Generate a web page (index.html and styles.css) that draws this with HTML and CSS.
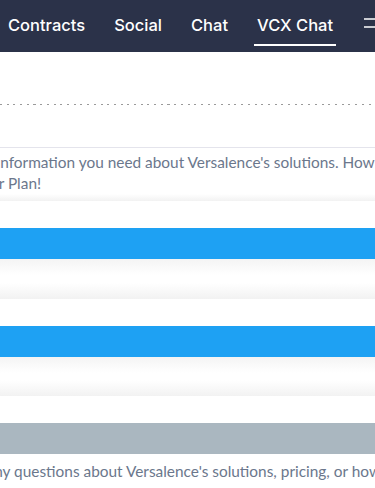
FILE: index.html
```html
<!DOCTYPE html>
<html lang="en">
<head>
    <meta charset="UTF-8">
    <meta name="viewport" content="width=device-width, initial-scale=1.0">
    <title>VCX Chat | Versalence</title>
    <link rel="stylesheet" href="styles.css">
</head>
<body>
    <nav class="top-nav">
        <ul class="nav-links">
            <li><a href="#">Contracts</a></li>
            <li><a href="#">Social</a></li>
            <li><a href="#">Chat</a></li>
            <li><a href="#" class="active">VCX Chat</a></li>
        </ul>
        <button class="menu-btn" aria-label="Menu">
            <svg width="18" height="12" viewBox="0 0 18 12">
                <path d="M0 1h18M0 9h18" stroke="#fff" stroke-width="1.5" fill="none"/>
            </svg>
        </button>
    </nav>

    <div class="page">
        <div class="title-area"></div>
        <hr class="dotted-rule">

        <section class="intro">
            <p class="intro-text">Find all the information you need about Versalence's solutions. How can we help you?<br>Choose your Plan!</p>
        </section>

        <div class="fade-top"></div>

        <div class="plans">
            <div class="plan">
                <div class="plan-body"></div>
                <a href="#" class="plan-btn plan-btn-blue"></a>
            </div>
            <div class="plan-sep"></div>
            <div class="plan">
                <div class="plan-body"></div>
                <a href="#" class="plan-btn plan-btn-blue"></a>
            </div>
            <div class="plan-sep"></div>
            <div class="plan">
                <div class="plan-body"></div>
                <a href="#" class="plan-btn plan-btn-gray"></a>
            </div>
        </div>

        <p class="contact-text">If you have any questions about Versalence's solutions, pricing, or how to get started, reach out to us.</p>
    </div>
</body>
</html>
```

FILE: styles.css
```css
* {
    margin: 0;
    padding: 0;
    box-sizing: border-box;
}

body {
    background-color: #fff;
    font-family: 'Lato', 'Open Sans', sans-serif;
    overflow: hidden;
}

.top-nav {
    height: 52px;
    background-color: #2b3249;
    display: flex;
    align-items: center;
    padding-left: 5px;
    position: relative;
}

.nav-links {
    list-style: none;
    display: flex;
    gap: 23px;
    height: 100%;
}

.nav-links li {
    display: flex;
}

.nav-links a {
    display: flex;
    align-items: center;
    padding: 0 3px 3px;
    color: #fff;
    text-decoration: none;
    font-family: 'Inter', 'Roboto', sans-serif;
    font-size: 16.5px;
    font-weight: 500;
    position: relative;
}

.nav-links a.active::after {
    content: "";
    position: absolute;
    left: 0;
    right: 0;
    top: 44px;
    height: 2px;
    background-color: #fff;
}

.menu-btn {
    position: absolute;
    left: 364px;
    top: 18px;
    background: none;
    border: none;
    display: flex;
}

.page {
    width: 100%;
}

.title-area {
    height: 52px;
}

.dotted-rule {
    border: none;
    height: 1px;
    background-image: repeating-linear-gradient(to right, #9a9a9a 0 2px, transparent 2px 6.7px);
}

.intro {
    margin-top: 42px;
    border-top: 1px solid #e4e4ec;
    padding-top: 4px;
    overflow: hidden;
}

.intro-text {
    white-space: nowrap;
    font-size: 15.4px;
    line-height: 21px;
    color: #6b778c;
    margin-left: -81px;
    text-indent: -1px;
}

.fade-top {
    height: 7px;
    background: linear-gradient(#fff, #f2f2f2);
}

.plan-body {
    height: 27px;
}

.plan-btn {
    display: block;
    height: 31px;
}

.plan-btn-blue {
    background-color: #1ea1f3;
}

.plan-btn-gray {
    background-color: #aab7c0;
}

.plan-sep {
    height: 39.5px;
    background: linear-gradient(#f4f4f4, #fff 40%, #fff 60%, #f2f2f2);
}

.contact-text {
    white-space: nowrap;
    font-size: 15.4px;
    line-height: 22px;
    color: #6b778c;
    margin-left: -91px;
    padding-top: 6px;
}
```
